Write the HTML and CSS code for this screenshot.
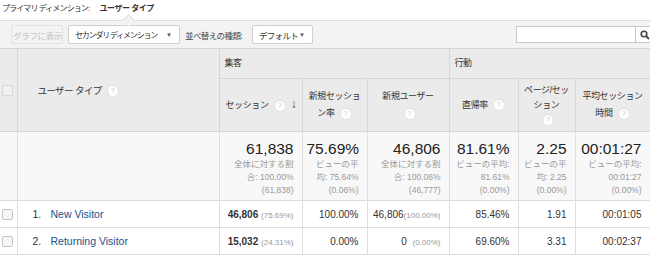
FILE: index.html
```html
<!DOCTYPE html>
<html>
<head>
  <meta charset="utf-8">
  <title>ユーザー タイプ</title>
  <link rel="stylesheet" href="styles.css">
</head>
<body>
  <div class="dim">プライマリ ディメンション: <b>ユーザー タイプ</b></div>

  <div class="toolbar">
    <span class="notch"></span>
    <span class="btn disabled">グラフに表示</span>
    <span class="btn drop secondary">セカンダリ ディメンション <span class="caret">▼</span></span>
    <span class="label">並べ替えの種類:</span>
    <span class="btn drop sorttype">デフォルト <span class="caret">▼</span></span>
    <span class="spacer"></span>
    <span class="search"><span class="box"></span><span class="go">
      <svg width="10" height="10" viewBox="0 0 10 10"><circle cx="4" cy="4" r="2.8" fill="none" stroke="#444" stroke-width="1.6"/><path d="M6 6 L9 9" stroke="#444" stroke-width="1.8"/></svg>
    </span></span>
  </div>

  <table class="grid">
    <colgroup>
      <col class="c0"><col class="c1"><col class="c2"><col class="c3"><col class="c4"><col class="c5"><col class="c6"><col class="c7">
    </colgroup>
    <thead>
      <tr class="h1">
        <th rowspan="2" class="chkcol"><span class="chk"></span></th>
        <th rowspan="2" class="dimhead">ユーザー タイプ <span class="q">?</span></th>
        <th colspan="3" class="group">集客</th>
        <th colspan="3" class="group">行動</th>
      </tr>
      <tr class="h2">
        <th class="left">セッション <span class="q">?</span> <span class="sort">↓</span></th>
        <th>新規セッショ<br>ン率 <span class="q">?</span></th>
        <th>新規ユーザー<br><span class="q">?</span></th>
        <th>直帰率 <span class="q">?</span></th>
        <th class="tight">ページ/セッ<br>ション<br><span class="q">?</span></th>
        <th>平均セッション<br>時間 <span class="q">?</span></th>
      </tr>
    </thead>
    <tbody>
      <tr class="total">
        <td class="chkcol"></td>
        <td></td>
        <td><div class="big">61,838</div><div class="sub">全体に対する割<br>合: 100.00%<br>(61,838)</div></td>
        <td><div class="big">75.69%</div><div class="sub">ビューの平<br>均: 75.64%<br>(0.06%)</div></td>
        <td><div class="big">46,806</div><div class="sub">全体に対する割<br>合: 100.06%<br>(46,777)</div></td>
        <td><div class="big">81.61%</div><div class="sub">ビューの平均:<br>81.61%<br>(0.00%)</div></td>
        <td><div class="big">2.25</div><div class="sub">ビューの平<br>均: 2.25<br>(0.00%)</div></td>
        <td><div class="big">00:01:27</div><div class="sub">ビューの平均:<br>00:01:27<br>(0.00%)</div></td>
      </tr>
      <tr class="row">
        <td class="chkcol"><span class="chk"></span></td>
        <td class="name"><span class="idx">1.</span><a href="#">New Visitor</a></td>
        <td><b>46,806</b> <span class="pct">(75.69%)</span></td>
        <td>100.00%</td>
        <td>46,806<span class="pct">(100.00%)</span></td>
        <td>85.46%</td>
        <td>1.91</td>
        <td>00:01:05</td>
      </tr>
      <tr class="row">
        <td class="chkcol"><span class="chk"></span></td>
        <td class="name"><span class="idx">2.</span><a href="#">Returning Visitor</a></td>
        <td><b>15,032</b> <span class="pct">(24.31%)</span></td>
        <td>0.00%</td>
        <td>0 &nbsp;<span class="pct">(0.00%)</span></td>
        <td>69.60%</td>
        <td>3.31</td>
        <td>00:02:37</td>
      </tr>
    </tbody>
  </table>
</body>
</html>
```

FILE: styles.css
```css
body {
  margin: 0;
  background: #fff;
  color: #333;
  font-family: "Liberation Sans", "Noto Sans CJK JP", sans-serif;
  font-size: 10px;
  overflow: hidden;
}

.dim {
  height: 20px;
  line-height: 17px;
  padding-left: 2px;
  font-size: 8px;
  letter-spacing: -0.9px;
}

.dim b {
  margin-left: 9px;
  letter-spacing: -0.5px;
}

.toolbar {
  position: relative;
  display: flex;
  align-items: center;
  height: 27px;
  background: #f3f3f3;
  border-top: 1px solid #dcdcdc;
  padding-left: 11px;
  gap: 5px;
}

.notch {
  position: absolute;
  top: -5px;
  left: 124px;
  width: 8px;
  height: 8px;
  border-right: 1px solid #dcdcdc;
  border-bottom: 1px solid #dcdcdc;
  transform: rotate(-135deg);
  background: #f3f3f3;
}

.btn {
  display: inline-flex;
  align-items: center;
  box-sizing: border-box;
  height: 19px;
  padding: 0 6px;
  background: #fff;
  border: 1px solid #d0d0d0;
  border-radius: 2px;
  font-size: 8.5px;
  letter-spacing: -0.7px;
  color: #333;
  white-space: nowrap;
}

.btn.disabled {
  width: 52px;
  background: #f3f3f3;
  border-color: #e2e2e2;
  color: #c4c4c4;
  padding: 0 1px;
  letter-spacing: -0.3px;
}

.btn.drop {
  justify-content: space-between;
  padding: 0 7px 0 6px;
}

.btn.secondary {
  width: 112px;
  font-size: 8px;
  letter-spacing: -1.2px;
}

.btn.sorttype {
  width: 61px;
}

.caret {
  font-size: 6px;
  letter-spacing: 0;
  color: #555;
}

.label {
  width: 62px;
  font-size: 8.5px;
  letter-spacing: -0.6px;
  color: #444;
  white-space: nowrap;
}

.spacer {
  flex: 1;
}

.search {
  display: flex;
  height: 17px;
}

.search .box {
  width: 118px;
  background: #fff;
  border: 1px solid #c8c8c8;
}

.search .go {
  width: 14px;
  display: flex;
  align-items: center;
  justify-content: flex-end;
  background: #fff;
  border-top: 1px solid #c8c8c8;
  border-bottom: 1px solid #c8c8c8;
}

.grid {
  border-collapse: collapse;
  table-layout: fixed;
  width: 650px;
}

.c0 { width: 17px; }
.c1 { width: 202px; }
.c2 { width: 83px; }
.c3 { width: 65px; }
.c4 { width: 82px; }
.c5 { width: 69px; }
.c6 { width: 57px; }
.c7 { width: 75px; }

.grid th {
  background: #ebebeb;
  border: 1px solid #d6d6d6;
  font-weight: normal;
  font-size: 9px;
  letter-spacing: -0.4px;
  color: #333;
  line-height: 17px;
  padding: 0 3px;
  text-align: center;
}

.grid tr.h1 {
  height: 30px;
}

.grid tr.h2 {
  height: 53px;
}

.grid th.group {
  text-align: left;
  padding-left: 5px;
}

.grid th.dimhead {
  text-align: left;
  padding-left: 20px;
  font-size: 9.5px;
  letter-spacing: -0.6px;
}

.grid th.left {
  text-align: left;
  padding-left: 6px;
}

.grid th.tight {
  line-height: 15px;
}

.grid .chkcol {
  padding: 0 0 0 2px;
  text-align: left;
  border-left: none;
}

.q {
  display: inline-block;
  width: 10px;
  height: 10px;
  border-radius: 50%;
  background: #fff;
  border: 1px solid #e2e2e2;
  color: #c8c8c8;
  font-size: 7px;
  letter-spacing: 0;
  line-height: 10px;
  text-align: center;
  vertical-align: middle;
  margin-left: 3px;
}

.sort {
  font-size: 12px;
  font-weight: bold;
  color: #444;
  margin-left: 3px;
}

.chk {
  display: inline-block;
  width: 9px;
  height: 9px;
  border: 1px solid #c4c4c4;
  border-radius: 2px;
  background: #f6f6f6;
  vertical-align: middle;
}

.grid th .chk {
  border-color: #d8d8d8;
  background: #efefef;
  border-radius: 0;
}

.grid td {
  border: 1px solid #dedede;
  text-align: right;
  padding: 0 8px 0 4px;
  font-size: 10px;
  color: #333;
}

.total {
  height: 69px;
}

.total td {
  background: #f8f8f8;
  vertical-align: top;
  padding-top: 8px;
}

.big {
  font-size: 15.5px;
  line-height: 18px;
  color: #222;
}

.sub {
  font-size: 8.5px;
  line-height: 13px;
  color: #999;
}

.row {
  height: 27px;
}

.grid td.name {
  text-align: left;
  padding-left: 15px;
  font-size: 10.5px;
}

.idx {
  display: inline-block;
  width: 18px;
  color: #333;
}

.name a {
  color: #1a4f8b;
  text-decoration: none;
}

.pct {
  font-size: 8px;
  color: #999;
}
```
